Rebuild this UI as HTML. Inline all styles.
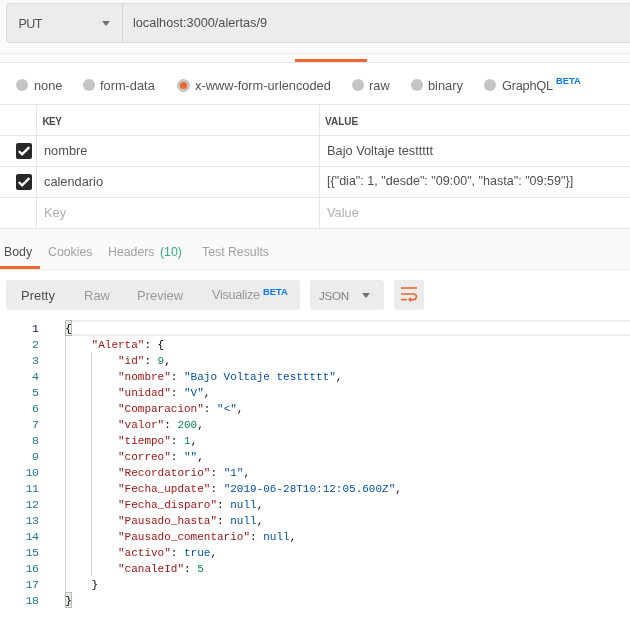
<!DOCTYPE html>
<html><head><meta charset="utf-8">
<style>
*{box-sizing:border-box;margin:0;padding:0}
html,body{width:630px;height:620px;overflow:hidden;background:#fff}
body{position:relative;font-family:"Liberation Sans",sans-serif;color:#505050}
.a{position:absolute;white-space:pre}
#top{position:absolute;left:0;top:0;width:630px;height:62px;background:#fafafa}
#urlbox{position:absolute;left:6px;top:3px;width:640px;height:40px;background:#ececec;border:1px solid #dadada;border-radius:3px}
#div1{position:absolute;left:122px;top:3px;width:1px;height:40px;background:#d8d8d8}
.hl{position:absolute;left:0;width:630px;height:1px;background:#e6e6e6}
.tri{position:absolute;width:0;height:0;border-left:4px solid transparent;border-right:4px solid transparent;border-top:5px solid #707070}
.radio{position:absolute;width:12px;height:12px;border-radius:50%;background:#c4c4c4}
.lbl{font-size:12.8px;color:#555;margin-top:1px}
.tbl{position:absolute;left:0;width:630px;height:1px;background:#e6e6e6}
.vl{position:absolute;width:1px;background:#e6e6e6}
.cb{position:absolute;left:16px;width:16px;height:16px;border-radius:2px;background:#282828}
.cell{font-size:12.8px;color:#505050}
.ph{color:#b0b0b0}
.tab{font-size:12.3px;color:#a0a0a0;margin-top:1px}
.seg{font-size:13px;color:#9a9a9a}
.beta{font-size:9.4px;font-weight:bold;color:#097bed}
#editor{position:absolute;left:0;top:320px;width:630px;height:300px;background:#fff}
.ln{position:absolute;left:0;width:38.7px;text-align:right;font-family:"Liberation Mono",monospace;font-size:11.6px;letter-spacing:-0.36px;padding-top:0.5px;color:#237893;line-height:16px;height:16px}
.code{position:absolute;left:65.2px;padding-top:0.5px;font-family:"Liberation Mono",monospace;font-size:11px;line-height:16px;height:16px;color:#000;white-space:pre}
.k{color:#a31515}.s{color:#0451a5}.n{color:#098658}
#root{position:absolute;left:0;top:0;width:630px;height:620px;will-change:transform}
</style></head><body><div id="root">
<div id="top"></div>
<div id="urlbox"></div>
<div id="div1"></div>
<div class="a" style="left:18.5px;top:16.5px;font-size:12.5px;letter-spacing:-0.6px;color:#505050">PUT</div>
<div class="tri" style="left:102px;top:21px"></div>
<div class="a" style="left:133px;top:16px;font-size:12.7px;color:#505050">localhost:3000/alertas/9</div>
<div class="hl" style="top:53px;background:#ececec"></div>
<div class="hl" style="top:62px;background:#e6e6e6"></div>
<div class="a" style="left:295px;top:59px;width:72px;height:3px;background:#f0652f"></div>

<!-- radios -->
<div class="radio" style="left:16px;top:79px"></div>
<div class="a lbl" style="left:34px;top:77px">none</div>
<div class="radio" style="left:83px;top:79px"></div>
<div class="a lbl" style="left:100px;top:77px">form-data</div>
<div class="radio" style="left:177px;top:79px;width:13px;height:13px;background:#c4c4c4"></div>
<div class="radio" style="left:180px;top:82px;width:7px;height:7px;background:#f0652f"></div>
<div class="a lbl" style="left:195px;top:77px">x-www-form-urlencoded</div>
<div class="radio" style="left:352px;top:79px"></div>
<div class="a lbl" style="left:369px;top:77px">raw</div>
<div class="radio" style="left:411px;top:79px"></div>
<div class="a lbl" style="left:428px;top:77px">binary</div>
<div class="radio" style="left:484px;top:79px"></div>
<div class="a lbl" style="left:502px;top:77px;letter-spacing:-0.25px">GraphQL</div>
<div class="a beta" style="left:556px;top:74.5px">BETA</div>

<!-- table -->
<div class="tbl" style="top:104px"></div>
<div class="tbl" style="top:135px"></div>
<div class="tbl" style="top:166px"></div>
<div class="tbl" style="top:197px"></div>
<div class="tbl" style="top:228px"></div>
<div class="vl" style="left:36px;top:104px;height:124px"></div>
<div class="vl" style="left:319px;top:104px;height:124px"></div>
<div class="a" style="left:42.5px;top:116px;font-size:10px;font-weight:bold;letter-spacing:-0.6px;color:#4a4a4a">KEY</div>
<div class="a" style="left:325px;top:116px;font-size:10px;font-weight:bold;color:#4a4a4a">VALUE</div>
<div class="cb" style="top:143px"><svg width="16" height="16" viewBox="0 0 16 16" style="position:absolute;left:0;top:0"><path d="M2.8 8L6.1 11.3L13.3 4.1" stroke="#fff" stroke-width="2.4" fill="none"/></svg></div>
<div class="cb" style="top:174px"><svg width="16" height="16" viewBox="0 0 16 16" style="position:absolute;left:0;top:0"><path d="M2.8 8L6.1 11.3L13.3 4.1" stroke="#fff" stroke-width="2.4" fill="none"/></svg></div>
<div class="a cell" style="left:44px;top:143px">nombre</div>
<div class="a cell" style="left:327px;top:143px">Bajo Voltaje testtttt</div>
<div class="a cell" style="left:44px;top:174px">calendario</div>
<div class="a cell" style="left:327px;top:174px;font-size:12.55px">[{"dia": 1, "desde": "09:00", "hasta": "09:59"}]</div>
<div class="a cell ph" style="left:44px;top:205px">Key</div>
<div class="a cell ph" style="left:327px;top:205px">Value</div>

<!-- response area -->
<div class="a" style="left:0;top:229px;width:630px;height:40px;background:#fafafa"></div>
<div class="a tab" style="left:4px;top:244px;color:#505050">Body</div>
<div class="a tab" style="left:48px;top:244px">Cookies</div>
<div class="a tab" style="left:108px;top:244px">Headers</div>
<div class="a tab" style="left:160px;top:244px;color:#30b07a">(10)</div>
<div class="a tab" style="left:202px;top:244px">Test Results</div>
<div class="a" style="left:0;top:266px;width:40px;height:3px;background:#f0652f"></div>
<div class="hl" style="top:269px;background:#eaeaea"></div>

<div class="a" style="left:6px;top:280px;width:294px;height:30px;background:#ececec;border-radius:3px"></div>
<div class="a seg" style="left:21px;top:288px;color:#505050">Pretty</div>
<div class="a seg" style="left:84px;top:288px">Raw</div>
<div class="a seg" style="left:137px;top:288px">Preview</div>
<div class="a seg" style="left:212px;top:288px;font-size:12.7px;letter-spacing:-0.3px">Visualize</div>
<div class="a beta" style="left:263px;top:286px">BETA</div>
<div class="a" style="left:310px;top:280px;width:74px;height:30px;background:#ececec;border-radius:3px"></div>
<div class="a seg" style="left:319px;top:289px;font-size:11.6px;letter-spacing:-0.3px;color:#808080">JSON</div>
<div class="tri" style="left:362px;top:293px"></div>
<div class="a" style="left:394px;top:280px;width:30px;height:30px;background:#ececec;border-radius:3px"></div>
<svg class="a" style="left:394px;top:280px" width="30" height="30" viewBox="0 0 30 30">
<g stroke="#f0652f" stroke-width="1.6" fill="none">
<path d="M7 8H23"/>
<path d="M7 14H19.6a2.8 2.8 0 0 1 0 5.6H16"/>
<path d="M7 19.6H12.8"/>
</g>
<path d="M14 19.6l3-2.6v5.2z" fill="#f0652f"/>
</svg>

<!-- editor -->
<div id="editor"></div>
<div class="a" style="left:65px;top:320px;width:570px;height:16px;border-top:2px solid #eeeeee;border-bottom:2px solid #eeeeee"></div>
<div class="a" style="left:65px;top:336px;width:1px;height:256px;background:#d3d3d3"></div>
<div class="a" style="left:91px;top:352px;width:1px;height:224px;background:#d3d3d3"></div>
<div class="a" style="left:65px;top:320px;width:7px;height:16px;border:1px solid #b9b9b9;background:#e5efe5"></div>
<div class="a" style="left:65px;top:592px;width:7px;height:16px;border:1px solid #b9b9b9;background:#e5efe5"></div>
<div class="ln" style="top:320px;color:#0b216f">1</div>
<div class="code" style="top:320px">{</div>
<div class="ln" style="top:336px">2</div>
<div class="code" style="top:336px">    <span class="k">"Alerta"</span>: {</div>
<div class="ln" style="top:352px">3</div>
<div class="code" style="top:352px">        <span class="k">"id"</span>: <span class="n">9</span>,</div>
<div class="ln" style="top:368px">4</div>
<div class="code" style="top:368px">        <span class="k">"nombre"</span>: <span class="s">"Bajo Voltaje testtttt"</span>,</div>
<div class="ln" style="top:384px">5</div>
<div class="code" style="top:384px">        <span class="k">"unidad"</span>: <span class="s">"V"</span>,</div>
<div class="ln" style="top:400px">6</div>
<div class="code" style="top:400px">        <span class="k">"Comparacion"</span>: <span class="s">"&lt;"</span>,</div>
<div class="ln" style="top:416px">7</div>
<div class="code" style="top:416px">        <span class="k">"valor"</span>: <span class="n">200</span>,</div>
<div class="ln" style="top:432px">8</div>
<div class="code" style="top:432px">        <span class="k">"tiempo"</span>: <span class="n">1</span>,</div>
<div class="ln" style="top:448px">9</div>
<div class="code" style="top:448px">        <span class="k">"correo"</span>: <span class="s">""</span>,</div>
<div class="ln" style="top:464px">10</div>
<div class="code" style="top:464px">        <span class="k">"Recordatorio"</span>: <span class="s">"1"</span>,</div>
<div class="ln" style="top:480px">11</div>
<div class="code" style="top:480px">        <span class="k">"Fecha_update"</span>: <span class="s">"2019-06-28T10:12:05.600Z"</span>,</div>
<div class="ln" style="top:496px">12</div>
<div class="code" style="top:496px">        <span class="k">"Fecha_disparo"</span>: <span class="s">null</span>,</div>
<div class="ln" style="top:512px">13</div>
<div class="code" style="top:512px">        <span class="k">"Pausado_hasta"</span>: <span class="s">null</span>,</div>
<div class="ln" style="top:528px">14</div>
<div class="code" style="top:528px">        <span class="k">"Pausado_comentario"</span>: <span class="s">null</span>,</div>
<div class="ln" style="top:544px">15</div>
<div class="code" style="top:544px">        <span class="k">"activo"</span>: <span class="s">true</span>,</div>
<div class="ln" style="top:560px">16</div>
<div class="code" style="top:560px">        <span class="k">"canaleId"</span>: <span class="n">5</span></div>
<div class="ln" style="top:576px">17</div>
<div class="code" style="top:576px">    }</div>
<div class="ln" style="top:592px">18</div>
<div class="code" style="top:592px">}</div>
</div></body></html>
